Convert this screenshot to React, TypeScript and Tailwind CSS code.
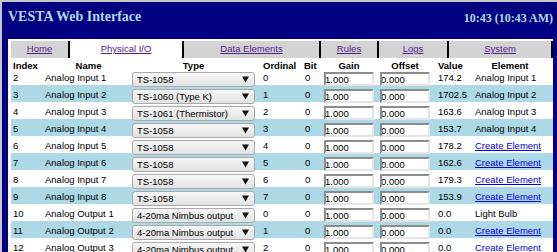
import React from 'react';

type Row = {
  index: number;
  name: string;
  type: string;
  ordinal: number;
  element: string;
  linked: boolean;
  value: string;
};

const rows: Row[] = [
  { index: 2, name: 'Analog Input 1', type: 'TS-1058', ordinal: 0, value: '174.2', element: 'Analog Input 1', linked: true },
  { index: 3, name: 'Analog Input 2', type: 'TS-1060 (Type K)', ordinal: 1, value: '1702.5', element: 'Analog Input 2', linked: true },
  { index: 4, name: 'Analog Input 3', type: 'TS-1061 (Thermistor)', ordinal: 2, value: '163.6', element: 'Analog Input 3', linked: true },
  { index: 5, name: 'Analog Input 4', type: 'TS-1058', ordinal: 3, value: '153.7', element: 'Analog Input 4', linked: true },
  { index: 6, name: 'Analog Input 5', type: 'TS-1058', ordinal: 4, value: '178.2', element: 'Create Element', linked: false },
  { index: 7, name: 'Analog Input 6', type: 'TS-1058', ordinal: 5, value: '162.6', element: 'Create Element', linked: false },
  { index: 8, name: 'Analog Input 7', type: 'TS-1058', ordinal: 6, value: '179.3', element: 'Create Element', linked: false },
  { index: 9, name: 'Analog Input 8', type: 'TS-1058', ordinal: 7, value: '153.9', element: 'Create Element', linked: false },
  { index: 10, name: 'Analog Output 1', type: '4-20ma Nimbus output', ordinal: 0, value: '0.0', element: 'Light Bulb', linked: true },
  { index: 11, name: 'Analog Output 2', type: '4-20ma Nimbus output', ordinal: 1, value: '0.0', element: 'Create Element', linked: false },
  { index: 12, name: 'Analog Output 3', type: '4-20ma Nimbus output', ordinal: 2, value: '0.0', element: 'Create Element', linked: false },
];

const tabs = [
  { label: 'Home', w: 'w-[59px]', active: false },
  { label: 'Physical I/O', w: 'w-[114px]', active: true },
  { label: 'Data Elements', w: 'w-[137px]', active: false },
  { label: 'Rules', w: 'w-[58px]', active: false },
  { label: 'Logs', w: 'w-[70px]', active: false },
  { label: 'System', w: 'w-[104px]', active: false },
];

const cols = 'grid grid-cols-[34px_87px_129px_43px_20px_56px_56px_37px_80px]';

const FakeSelect: React.FC<{ value: string }> = ({ value }) => (
  <div className="mt-[4px] flex h-[15px] w-[123px] items-center justify-between rounded-[3px] border border-[#a9a9a9] bg-gradient-to-b from-[#f7f7f7] to-[#e2e2e2] pl-[4px] pr-[5px] leading-[11px] whitespace-nowrap">
    <span>{value}</span>
    <svg width="7" height="7" viewBox="0 0 7 7">
      <polygon points="0,0.5 7,0.5 3.5,6.5" fill="#111" />
    </svg>
  </div>
);

const FakeInput: React.FC<{ value: string }> = ({ value }) => (
  <div className="mt-[4px] flex h-[14px] w-[50px] items-center overflow-hidden border-t-2 border-l-2 border-r-2 border-b-2 border-t-[#8c8c8c] border-l-[#8c8c8c] border-r-[#e4e4e4] border-b-[#e4e4e4] bg-white leading-[11px]">
    <span className="-ml-[1px] pt-[1px]">{value}</span>
  </div>
);

const DataRow: React.FC<{ row: Row; blue: boolean }> = ({ row, blue }) => (
  <div className={cols + ' h-[17px] ' + (blue ? 'bg-[#add8e6]' : 'bg-white')}>
    <div className="pl-[2px] pt-[4px] leading-[11px]">{row.index}</div>
    <div className="pt-[4px] leading-[11px] whitespace-nowrap">{row.name}</div>
    <div>
      <FakeSelect value={row.type} />
    </div>
    <div className="pl-[2px] pt-[4px] leading-[11px]">{row.ordinal}</div>
    <div className="pl-[1px] pt-[4px] leading-[11px]">0</div>
    <div>
      <FakeInput value="1.000" />
    </div>
    <div>
      <FakeInput value="0.000" />
    </div>
    <div className="pl-[2px] pt-[4px] leading-[11px]">{row.value}</div>
    <div className="pl-[2px] pt-[4px] leading-[11px] whitespace-nowrap">
      {row.linked ? (
        <span>{row.element}</span>
      ) : (
        <a href="#" className="text-[#0000ee] underline">{row.element}</a>
      )}
    </div>
  </div>
);

export default function App() {
  return (
    <div
      className="h-[252px] w-[557px] overflow-hidden border-t-2 border-l-2 border-[#c6c6c6] bg-[#000080] text-[9.5px] text-black"
      style={{ fontFamily: '"Liberation Sans", Arial, sans-serif' }}
    >
      <div
        className="flex h-[37px] items-start justify-between pl-[6px] pr-[4px] font-bold text-[#add8e6]"
        style={{ fontFamily: '"Liberation Serif", "Times New Roman", serif' }}
      >
        <div className="pt-[7px] text-[14px] leading-[16px]">VESTA Web Interface</div>
        <div className="pt-[9px] text-[12px] leading-[14px]">10:43 (10:43 AM)</div>
      </div>

      <div className="ml-[6px] h-[300px] w-[545px] bg-white pl-[3px] pt-[2px]">
        <div className="flex h-[17px]">
          {tabs.map((t) => (
            <div
              key={t.label}
              className={t.w + ' h-[17px] border-r-2 border-black pt-[2px] text-center leading-[11px] ' + (t.active ? 'bg-white' : 'bg-[#d3d3d3]')}
            >
              <a href="#" className="text-[#551a8b] underline">{t.label}</a>
            </div>
          ))}
        </div>

        <div className={cols + ' h-[10px] pt-[2px] font-bold leading-[11px]'}>
          <div className="pl-[2px]">Index</div>
          <div className="text-center">Name</div>
          <div className="w-[123px] text-center">Type</div>
          <div className="pl-[2px]">Ordinal</div>
          <div>Bit</div>
          <div className="w-[50px] text-center">Gain</div>
          <div className="w-[50px] text-center">Offset</div>
          <div className="pl-[2px]">Value</div>
          <div className="w-[74px] text-center">Element</div>
        </div>

        {rows.map((r) => (
          <DataRow key={r.index} row={r} blue={r.index % 2 === 1} />
        ))}
      </div>
    </div>
  );
}
